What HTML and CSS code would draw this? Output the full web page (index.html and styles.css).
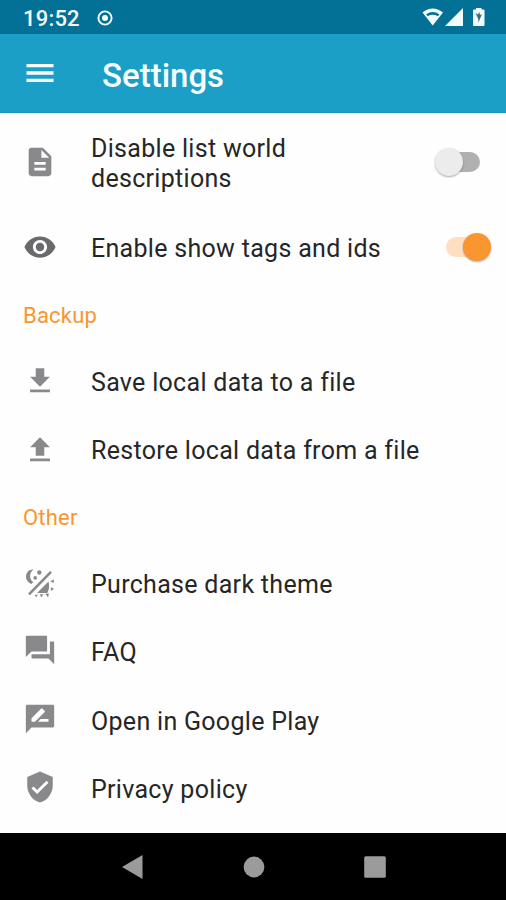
FILE: index.html
```html
<!DOCTYPE html>
<html lang="en">
<head>
<meta charset="utf-8">
<title>Settings</title>
<link rel="stylesheet" href="styles.css">
</head>
<body>
<div class="status">
  <span class="time">19:52</span>
  <svg class="rec" viewBox="0 0 16 16"><circle cx="8" cy="8" r="6.600" fill="none" stroke="currentColor" stroke-width="1.900"/><circle cx="8" cy="8" r="3" fill="currentColor"/></svg>
  <svg class="signals" viewBox="0 0 64 20">
    <path d="M0.500 4.400Q10.700-3.400 21 4.400L10.700 17.500Z" fill="currentColor"/>
    <path d="M4.200 6.200Q10.700 2 17.300 6.200L15.900 8.200Q10.700 5.400 5.600 8.200Z" fill="#037095"/>
    <path d="M23 18H41V0Z" fill="currentColor"/>
    <path d="M52 1.500H54V0H59.500V1.500H61.500Q62.500 1.500 62.500 2.500V17Q62.500 18 61.500 18H52Q51 18 51 17V2.500Q51 1.500 52 1.500Z" fill="currentColor"/>
    <path d="M53.500 5L56 6.500L57.500 4L58 7L60 6L57.500 12L56.300 14.500V11Z" fill="#36718a"/>
  </svg>
</div>
<header class="bar">
  <svg class="menu" viewBox="0 0 24 24"><path d="M3 18h18v-2.200H3zm0-4.900h18v-2.200H3zM3 6v2.200h18V6z" fill="currentColor"/></svg>
  <h1>Settings</h1>
</header>
<main>
  <div class="row tall">
    <svg class="icon" viewBox="0 0 24 24"><path d="M14 2H6c-1.100 0-1.990.9-1.990 2L4 20c0 1.100.89 2 1.990 2H18c1.100 0 2-.9 2-2V8l-6-6zm2 16H8v-2h8v2zm0-4H8v-2h8v2zm-3-5V3.500L18.500 9H13z"/></svg>
    <span class="label">Disable list world<br>descriptions</span>
    <span class="switch"><i></i></span>
  </div>
  <div class="row show-tags">
    <svg class="icon eye" viewBox="0 0 24 24"><path d="M12 4.500C7 4.500 2.730 7.610 1 12c1.730 4.390 6 7.500 11 7.500s9.270-3.110 11-7.500c-1.730-4.390-6-7.500-11-7.500zM12 17c-2.760 0-5-2.240-5-5s2.240-5 5-5 5 2.240 5 5-2.240 5-5 5zm0-8c-1.660 0-3 1.340-3 3s1.340 3 3 3 3-1.340 3-3-1.340-3-3-3z"/></svg>
    <span class="label">Enable show tags and ids</span>
    <span class="switch on"><i></i></span>
  </div>
  <h2 class="first">Backup</h2>
  <div class="row">
    <svg class="icon" viewBox="0 0 24 24"><path d="M19 9h-4V3H9v6H5l7 7 7-7zM5 18v2h14v-2H5z"/></svg>
    <span class="label">Save local data to a file</span>
  </div>
  <div class="row">
    <svg class="icon" viewBox="0 0 24 24"><path d="M9 16h6v-6h4l-7-7-7 7h4zm-4 2h14v2H5z"/></svg>
    <span class="label">Restore local data from a file</span>
  </div>
  <h2>Other</h2>
  <div class="row">
    <svg class="icon" viewBox="0 0 34 34">
      <path d="M6 28.300L28 5.800" stroke="currentColor" stroke-width="2.600" fill="none"/>
      <path d="M10.500 3.500C5 3.200 2.300 7.500 3.200 12.500Q4.300 16.200 8.300 18L10.300 16.300C6.300 13 5.800 7 10.500 3.500Z"/>
      <path d="M14 27H24.300Q27.200 21.500 25.500 15.500Z"/>
      <circle cx="16.300" cy="6.500" r="2.200"/><circle cx="12.200" cy="11.900" r="1.800"/>
      <path d="M27.300 15.500L30.800 13.300V17ZM27.800 21.200L31.300 23L27.800 24.800ZM22.300 28L25.800 27.300L25.200 31.500ZM16.500 28.300H20.300L18.500 31.300ZM11.500 29.300L14.800 28.300L13.600 31.300Z"/>
    </svg>
    <span class="label">Purchase dark theme</span>
  </div>
  <div class="row">
    <svg class="icon raised" viewBox="0 0 24 24"><path d="M21.500 6H19v9H6v2.500c0 .3.200.5.500.5H18l4 4V6.500c0-.3-.2-.5-.5-.5zM17 12.500v-10c0-.3-.2-.5-.5-.5h-14c-.3 0-.5.2-.5.5V17l4-4h10.500c.3 0 .5-.2.500-.5z"/></svg>
    <span class="label">FAQ</span>
  </div>
  <div class="row">
    <svg class="icon raised" viewBox="0 0 24 24"><path d="M21 2H3c-.6 0-1 .4-1 1V22l4-4h15c.6 0 1-.4 1-1V3c0-.6-.4-1-1-1zM6 14v-2.470l6.880-6.880c.2-.2.510-.2.710 0l1.770 1.770c.2.2.2.510 0 .710L8.470 14H6zm12 0h-7.500l2-2H18v2z"/></svg>
    <span class="label">Open in Google Play</span>
  </div>
  <div class="row">
    <svg class="icon raised" viewBox="0 0 24 24"><path d="M12 1L3 5v6c0 5.550 3.840 10.740 9 12 5.160-1.260 9-6.450 9-12V5l-9-4zm-2 16l-4-4 1.410-1.410L10 14.170l6.590-6.590L18 9l-8 8z"/></svg>
    <span class="label">Privacy policy</span>
  </div>
</main>
<nav class="nav">
  <svg viewBox="0 0 24 24"><path d="M1 12L21.500 0V24Z"/></svg>
  <svg viewBox="0 0 24 24"><circle cx="12" cy="12" r="10.400"/></svg>
  <svg viewBox="0 0 24 24"><rect x="1.200" y="1.200" width="21.600" height="21.600" rx="1.500"/></svg>
</nav>
</body>
</html>
```
FILE: styles.css
```css
* { box-sizing: border-box; }
body {
  margin: 0;
  height: 900px;
  display: flex;
  flex-direction: column;
  background: #fefefe;
  font-family: Roboto, "Liberation Sans", sans-serif;
  color: #262626;
  overflow: hidden;
}
.status {
  height: 34px;
  flex: none;
  display: flex;
  align-items: center;
  padding: 2px 20px 0 23px;
  background: #037095;
  color: #f4fbfd;
}
.time { width: 74px; font-size: 22px; font-weight: 500; letter-spacing: 0.2px; }
.rec { width: 16px; height: 16px; }
.signals { width: 64px; height: 20px; margin-left: auto; }
.bar {
  height: 79px;
  flex: none;
  display: flex;
  align-items: center;
  padding-left: 22px;
  background: #1b9fc6;
  border-bottom: 1px solid #1795ba;
  color: #f8fdff;
}
.menu { width: 36px; height: 36px; margin-right: 44px; }
h1 { margin: 5px 0 0; font-size: 33px; font-weight: 500; line-height: 40px; }
main { flex: 1; }
.row { height: 68.500px; display: flex; align-items: center; padding: 0 15px 0 23px; }
.row.tall { height: 100px; padding-right: 26px; }
.icon { width: 34px; height: 34px; margin: -3px 34px 0 0; flex: none; fill: currentColor; color: #89898c; }
.icon.eye { color: #6a6a6c; margin-top: -1px; }
.icon.raised { margin-top: -6px; }
.label { flex: 1; font-size: 25px; line-height: 30px; letter-spacing: 0.3px; }
.tall .label { padding-top: 2px; }
.show-tags .label { padding-top: 3px; }
h2 {
  margin: 0;
  height: 65px;
  padding-left: 23px;
  font-size: 22px;
  font-weight: 400;
  line-height: 64px;
  letter-spacing: 0.2px;
  color: #f9962f;
}
h2.first { height: 67px; line-height: 68px; }
.switch {
  position: relative;
  width: 45px;
  height: 28px;
  display: flex;
  align-items: center;
}
.switch::before {
  content: "";
  position: absolute;
  right: 0;
  top: 4px;
  width: 35px;
  height: 20px;
  border-radius: 10px;
  background: #b0b0b0;
}
.switch i {
  position: relative;
  width: 28px;
  height: 28px;
  border-radius: 50%;
  background: #ececec;
  box-shadow: 0 1px 2px #0005;
}
.tall .switch { margin-top: -2px; }
.switch.on { justify-content: flex-end; }
.switch.on::before { right: auto; left: 0; background: #ffdfc0; }
.switch.on i { background: #f9962f; }
.nav {
  height: 67px;
  flex: none;
  display: flex;
  justify-content: center;
  align-items: center;
  gap: 97px;
  padding-left: 1px;
  background: #000;
}
.nav svg { width: 24px; height: 24px; fill: #9b9b9b; }
```
